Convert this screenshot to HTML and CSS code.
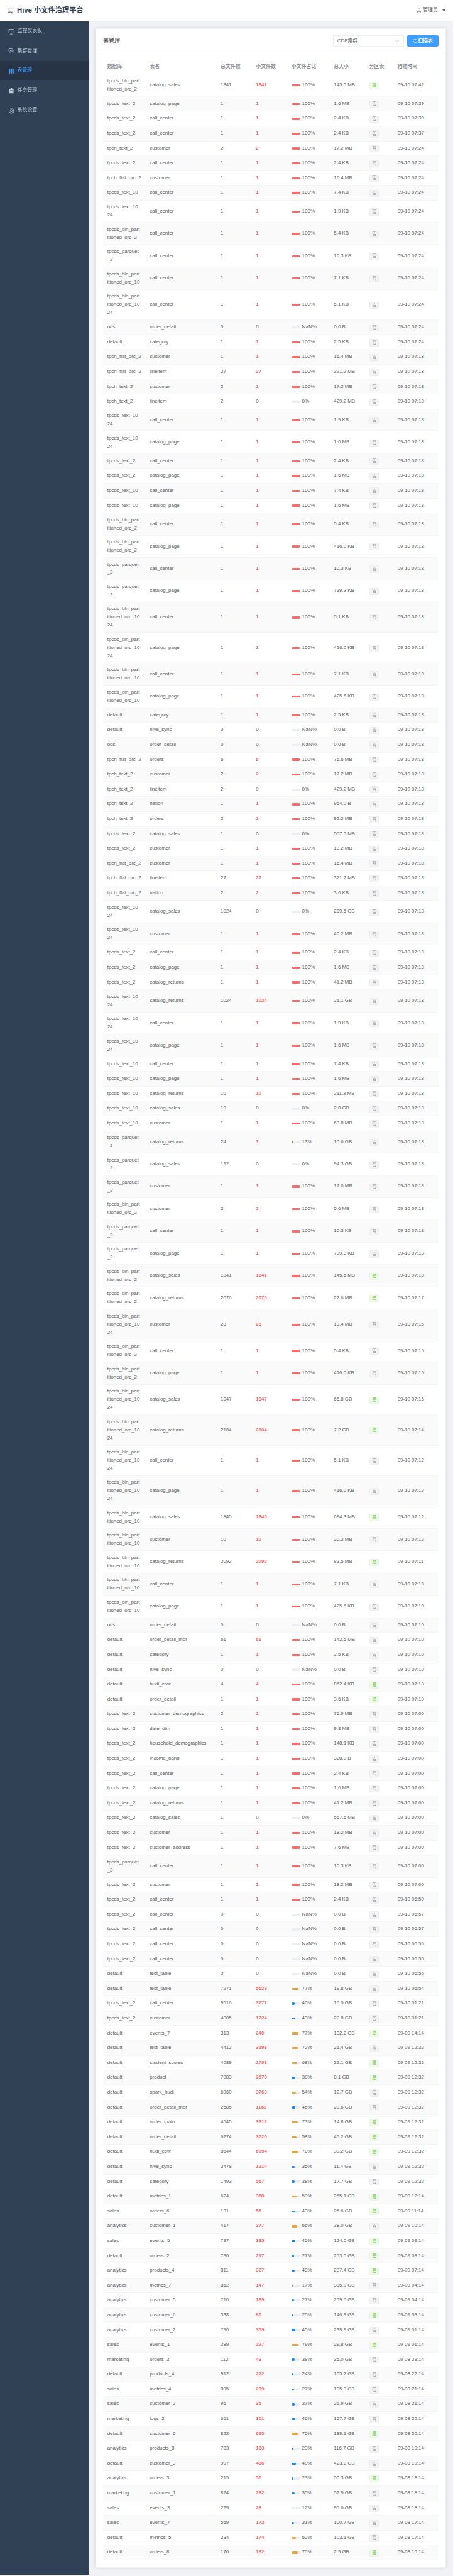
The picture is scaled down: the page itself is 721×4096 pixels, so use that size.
FILE: index.html
```html
<!DOCTYPE html>
<html lang="zh-CN">
<head>
<meta charset="utf-8">
<title>Hive 小文件治理平台</title>
<link rel="stylesheet" href="styles.css">
</head>
<body>
<div class="app">
  <header class="topbar">
    <h1 class="brand">
      <svg class="brand-icon" viewBox="0 0 1024 1024"><path d="M32 128h960v64H32z"/><path d="M192 192v512h640V192zm-64-64h768v608a32 32 0 0 1-32 32H160a32 32 0 0 1-32-32z"/><path d="M322.176 960H248.32l144.64-250.56 55.424 32zm453.888 0h-73.856L576 741.44l55.424-32z"/></svg>
      <span>Hive 小文件治理平台</span>
    </h1>
    <div class="user">
      <svg class="user-icon" viewBox="0 0 1024 1024"><path d="M512 512a192 192 0 1 0 0-384 192 192 0 0 0 0 384m0 64a256 256 0 1 1 0-512 256 256 0 0 1 0 512m320 320v-96a96 96 0 0 0-96-96H288a96 96 0 0 0-96 96v96a32 32 0 1 1-64 0v-96a160 160 0 0 1 160-160h448a160 160 0 0 1 160 160v96a32 32 0 1 1-64 0"/></svg>
      <span>管理员</span>
      <svg class="caret" viewBox="0 0 10 8"><path d="M0 0h10L5 8z"/></svg>
    </div>
  </header>
  <div class="layout">
    <nav class="sidebar">
      <a class="menu-item"><svg viewBox="0 0 1024 1024"><path d="M544 768v128h192a32 32 0 1 1 0 64H288a32 32 0 1 1 0-64h192V768H192A128 128 0 0 1 64 640V256a128 128 0 0 1 128-128h640a128 128 0 0 1 128 128v384a128 128 0 0 1-128 128zM192 192a64 64 0 0 0-64 64v384a64 64 0 0 0 64 64h640a64 64 0 0 0 64-64V256a64 64 0 0 0-64-64z"/></svg><span>监控仪表板</span></a>
      <a class="menu-item"><svg viewBox="0 0 1024 1024"><path d="M640 384v64H448a128 128 0 0 0-128 128v128a128 128 0 0 0 128 128h320a128 128 0 0 0 128-128V576a128 128 0 0 0-64-110.848V394.88c74.56 26.368 128 97.472 128 181.056v128a192 192 0 0 1-192 192H448a192 192 0 0 1-192-192V576a192 192 0 0 1 192-192z"/><path d="M384 640v-64h192a128 128 0 0 0 128-128V320a128 128 0 0 0-128-128H256a128 128 0 0 0-128 128v128a128 128 0 0 0 64 110.848v70.272A192.064 192.064 0 0 1 64 448V320a192 192 0 0 1 192-192h320a192 192 0 0 1 192 192v128a192 192 0 0 1-192 192z"/></svg><span>集群管理</span></a>
      <a class="menu-item active"><svg viewBox="0 0 1024 1024"><path d="M640 384v256H384V384zm64 0h192v256H704zm-64 512H384V704h256zm64 0V704h192v192zm-64-768v192H384V128zm64 0h192v192H704zM320 384v256H128V384zm0 512H128V704h192zm0-768v192H128V128z"/></svg><span>表管理</span></a>
      <a class="menu-item"><svg viewBox="0 0 1024 1024"><path d="M704 192h160v736H160V192h160v64h384zM288 512h448v-64H288zm0 256h448v-64H288zm96-576V96h256v96z"/></svg><span>任务管理</span></a>
      <a class="menu-item"><svg viewBox="0 0 1024 1024"><path d="M600.704 64a32 32 0 0 1 30.464 22.208l35.2 109.376c14.784 7.232 28.928 15.36 42.432 24.512l112.384-24.192a32 32 0 0 1 34.432 15.36L944.32 364.8a32 32 0 0 1-4.032 37.504l-77.12 85.12a357.12 357.12 0 0 1 0 49.024l77.12 85.248a32 32 0 0 1 4.032 37.504l-88.704 153.6a32 32 0 0 1-34.432 15.296L708.8 803.904c-13.44 9.088-27.648 17.28-42.368 24.512l-35.264 109.376A32 32 0 0 1 600.704 960H423.296a32 32 0 0 1-30.464-22.208L357.696 828.48a351.616 351.616 0 0 1-42.56-24.64l-112.32 24.256a32 32 0 0 1-34.432-15.36L79.68 659.2a32 32 0 0 1 4.032-37.504l77.12-85.248a357.12 357.12 0 0 1 0-48.896l-77.12-85.248A32 32 0 0 1 79.68 364.8l88.704-153.6a32 32 0 0 1 34.432-15.296l112.32 24.256c13.568-9.152 27.776-17.408 42.56-24.64l35.2-109.312A32 32 0 0 1 423.232 64H600.64zm-23.424 64H446.72l-36.352 113.088-24.512 11.968a294.113 294.113 0 0 0-34.816 20.096l-22.656 15.36-116.224-25.088-65.28 113.152 79.68 88.192-1.92 27.136a293.12 293.12 0 0 0 0 40.192l1.92 27.136-79.808 88.192 65.344 113.152 116.224-25.024 22.656 15.296a294.113 294.113 0 0 0 34.816 20.096l24.512 11.968L446.72 896h130.688l36.48-113.152 24.448-11.904a288.282 288.282 0 0 0 34.752-20.096l22.592-15.296 116.288 25.024 65.28-113.152-79.744-88.192 1.92-27.136a293.12 293.12 0 0 0 0-40.256l-1.92-27.136 79.808-88.128-65.344-113.152-116.288 24.96-22.592-15.232a287.616 287.616 0 0 0-34.752-20.096l-24.448-11.904L577.344 128zM512 320a192 192 0 1 1 0 384 192 192 0 0 1 0-384m0 64a128 128 0 1 0 0 256 128 128 0 0 0 0-256"/></svg><span>系统设置</span></a>
    </nav>
    <main class="content">
      <section class="card">
        <div class="card-header">
          <span class="card-title">表管理</span>
          <div class="tools">
            <div class="select">
              <span>CDP集群</span>
              <svg viewBox="0 0 1024 1024"><path d="M831.872 340.864 512 652.672 192.128 340.864a30.592 30.592 0 0 0-42.752 0 29.12 29.12 0 0 0 0 41.6L489.664 714.24a32 32 0 0 0 44.672 0l340.288-331.712a29.12 29.12 0 0 0 0-41.728 30.592 30.592 0 0 0-42.752 0z"/></svg>
            </div>
            <button class="scan"><svg viewBox="0 0 1024 1024"><path d="M771.776 794.88A384 384 0 0 1 128 512h64a320 320 0 0 0 555.712 216.448H654.72a32 32 0 1 1 0-64h149.056a32 32 0 0 1 32 32v148.928a32 32 0 1 1-64 0v-50.56zM276.288 295.616h92.992a32 32 0 0 1 0 64H220.16a32 32 0 0 1-32-32V178.56a32 32 0 0 1 64 0v50.56A384 384 0 0 1 896.128 512h-64a320 320 0 0 0-555.776-216.384z"/></svg><span>扫描表</span></button>
          </div>
        </div>
        <div class="card-body">
          <div class="row head">
            <div>数据库</div><div>表名</div><div>总文件数</div><div>小文件数</div><div>小文件占比</div><div>总大小</div><div>分区表</div><div>扫描时间</div>
          </div>
          <div id="rows"></div>
        </div>
      </section>
    </main>
  </div>
</div>
<script src="tables.js"></script>
</body>
</html>
```
FILE: styles.css
```css
* {
  box-sizing: border-box;
}

body {
  margin: 0;
  background: #f0f2f5;
}

.app {
  zoom: 0.5635;
  font-family: "Liberation Sans", "Noto Sans CJK SC", sans-serif;
  font-size: 14px;
  line-height: 23px;
  color: #606266;
}

svg {
  display: block;
  fill: currentColor;
  flex: none;
}

.topbar {
  height: 60px;
  padding: 0 20px;
  display: flex;
  align-items: center;
  justify-content: space-between;
  background: #fff;
  box-shadow: inset 0 -1px 0 #e4e7ed;
}

.brand {
  margin: 0;
  display: flex;
  align-items: center;
  gap: 8px;
  font-size: 20px;
  font-weight: 700;
  color: #304156;
  white-space: nowrap;
}

.brand-icon {
  width: 20px;
  height: 20px;
}

.user {
  display: flex;
  align-items: center;
  gap: 4px;
}

.user-icon {
  width: 14px;
  height: 14px;
}

.caret {
  width: 9px;
  height: 7px;
  margin: 0 2px 0 8px;
}

.layout {
  display: flex;
}

.sidebar {
  width: 250px;
  flex: none;
  background: #304156;
}

.menu-item {
  height: 56px;
  padding: 0 23px;
  display: flex;
  align-items: center;
  gap: 8px;
  color: #bfcbd9;
}

.menu-item svg {
  width: 18px;
  height: 18px;
}

.menu-item.active {
  background: #263445;
  color: #409eff;
}

.content {
  flex: 1;
  min-width: 0;
  padding: 20px;
}

.card {
  padding: 1px;
  background: #fff;
  border-radius: 4px;
  box-shadow: inset 0 0 0 1px #e4e7ed, 0 0 12px rgba(0, 0, 0, 0.12);
}

.card-header {
  height: 69px;
  padding: 0 20px;
  display: flex;
  align-items: center;
  justify-content: space-between;
  box-shadow: inset 0 -1px 0 #e4e7ed;
}

.card-title {
  font-size: 16px;
  color: #303133;
}

.tools {
  display: flex;
  gap: 10px;
}

.select {
  width: 200px;
  height: 32px;
  padding: 0 12px;
  display: flex;
  align-items: center;
  justify-content: space-between;
  border-radius: 4px;
  box-shadow: inset 0 0 0 1px #dcdfe6;
}

.select svg {
  width: 14px;
  height: 14px;
  color: #a8abb2;
}

.scan {
  width: 88px;
  height: 32px;
  padding: 0;
  display: flex;
  align-items: center;
  justify-content: center;
  border: 0;
  border-radius: 4px;
  background: #409eff;
  color: #fff;
  font: inherit;
  font-weight: 500;
}

.scan svg {
  width: 14px;
  height: 14px;
}

.card-body {
  padding: 20px;
}

.row {
  min-height: 41.88px;
  padding: 8px 0 9px;
  display: grid;
  grid-template-columns: 120px 200px 100px 100px 120px 100px 80px 1fr;
  align-items: center;
  background: #fff;
  box-shadow: inset 0 -1px 0 #ebeef5;
}

.row > div {
  padding: 0 12px;
  white-space: pre;
}

.row.even {
  background: #fafafa;
}

.row.head {
  min-height: 40px;
  font-weight: 700;
  color: #909399;
}

.small-files {
  color: #f56c6c;
  font-weight: 700;
}

.row > .ratio {
  display: flex;
  align-items: center;
  gap: 5px;
  font-size: 14.4px;
}

.track {
  width: 25px;
  height: 6px;
  border-radius: 3px;
  overflow: hidden;
  background: #ebeef5;
}

.fill {
  height: 100%;
  border-radius: 3px;
}

.fill.danger { background: #f56c6c; }
.fill.warning { background: #e6a23c; }
.fill.primary { background: #1989fa; }
.fill.success { background: #67c23a; }

.tag {
  width: 28px;
  height: 20px;
  margin-top: 2px;
  display: flex;
  align-items: center;
  justify-content: center;
  border-radius: 4px;
  font-size: 12px;
  line-height: 1;
  color: #909399;
  background: #f4f4f5;
  box-shadow: inset 0 0 0 1px #e9e9eb;
}

.tag.yes {
  color: #67c23a;
  background: #f0f9eb;
  box-shadow: inset 0 0 0 1px #e1f3d8;
}
```
FILE: tables.js
```js
// Database names, with the line breaks the narrow column gives them.
const DB = {
  b2: 'tpcds_bin_part\nitioned_orc_2',
  b10: 'tpcds_bin_part\nitioned_orc_10',
  b1024: 'tpcds_bin_part\nitioned_orc_10\n24',
  pq: 'tpcds_parquet\n_2',
  t2: 'tpcds_text_2',
  t10: 'tpcds_text_10',
  t1024: 'tpcds_text_10\n24',
  h2: 'tpch_text_2',
  f2: 'tpch_flat_orc_2',
  def: 'default',
  ana: 'analytics',
  mkt: 'marketing'
};

// database, table, total files, small files, size, scan time, partitioned
const DATA = `
b2,catalog_sales,1841,1841,145.5 MB,09-10 07:42,y
t2,catalog_page,1,1,1.6 MB,09-10 07:39
t2,call_center,1,1,2.4 KB,09-10 07:39
t2,call_center,1,1,2.4 KB,09-10 07:37
h2,customer,2,2,17.2 MB,09-10 07:24
t2,call_center,1,1,2.4 KB,09-10 07:24
f2,customer,1,1,16.4 MB,09-10 07:24
t10,call_center,1,1,7.4 KB,09-10 07:24
t1024,call_center,1,1,1.9 KB,09-10 07:24
b2,call_center,1,1,5.4 KB,09-10 07:24
pq,call_center,1,1,10.3 KB,09-10 07:24
b10,call_center,1,1,7.1 KB,09-10 07:24
b1024,call_center,1,1,5.1 KB,09-10 07:24
ods,order_detail,0,0,0.0 B,09-10 07:24
def,category,1,1,2.5 KB,09-10 07:24
f2,customer,1,1,16.4 MB,09-10 07:18
f2,lineitem,27,27,321.2 MB,09-10 07:18
h2,customer,2,2,17.2 MB,09-10 07:18
h2,lineitem,2,0,429.2 MB,09-10 07:18
t1024,call_center,1,1,1.9 KB,09-10 07:18
t1024,catalog_page,1,1,1.6 MB,09-10 07:18
t2,call_center,1,1,2.4 KB,09-10 07:18
t2,catalog_page,1,1,1.6 MB,09-10 07:18
t10,call_center,1,1,7.4 KB,09-10 07:18
t10,catalog_page,1,1,1.6 MB,09-10 07:18
b2,call_center,1,1,5.4 KB,09-10 07:18
b2,catalog_page,1,1,416.0 KB,09-10 07:18
pq,call_center,1,1,10.3 KB,09-10 07:18
pq,catalog_page,1,1,739.3 KB,09-10 07:18
b1024,call_center,1,1,5.1 KB,09-10 07:18
b1024,catalog_page,1,1,416.0 KB,09-10 07:18
b10,call_center,1,1,7.1 KB,09-10 07:18
b10,catalog_page,1,1,425.6 KB,09-10 07:18
def,category,1,1,2.5 KB,09-10 07:18
def,hive_sync,0,0,0.0 B,09-10 07:18
ods,order_detail,0,0,0.0 B,09-10 07:18
f2,orders,6,6,76.6 MB,09-10 07:18
h2,customer,2,2,17.2 MB,09-10 07:18
h2,lineitem,2,0,429.2 MB,09-10 07:18
h2,nation,1,1,964.0 B,09-10 07:18
h2,orders,2,2,92.2 MB,09-10 07:18
t2,catalog_sales,1,0,567.6 MB,09-10 07:18
t2,customer,1,1,18.2 MB,09-10 07:18
f2,customer,1,1,16.4 MB,09-10 07:18
f2,lineitem,27,27,321.2 MB,09-10 07:18
f2,nation,2,2,3.6 KB,09-10 07:18
t1024,catalog_sales,1024,0,289.5 GB,09-10 07:18
t1024,customer,1,1,40.2 MB,09-10 07:18
t2,call_center,1,1,2.4 KB,09-10 07:18
t2,catalog_page,1,1,1.6 MB,09-10 07:18
t2,catalog_returns,1,1,41.2 MB,09-10 07:18
t1024,catalog_returns,1024,1024,21.1 GB,09-10 07:18
t1024,call_center,1,1,1.9 KB,09-10 07:18
t1024,catalog_page,1,1,1.6 MB,09-10 07:18
t10,call_center,1,1,7.4 KB,09-10 07:18
t10,catalog_page,1,1,1.6 MB,09-10 07:18
t10,catalog_returns,10,10,211.3 MB,09-10 07:18
t10,catalog_sales,10,0,2.8 GB,09-10 07:18
t10,customer,1,1,63.8 MB,09-10 07:18
pq,catalog_returns,24,3,10.6 GB,09-10 07:18
pq,catalog_sales,192,0,94.3 GB,09-10 07:18
pq,customer,1,1,17.0 MB,09-10 07:18
b2,customer,2,2,5.6 MB,09-10 07:18
pq,call_center,1,1,10.3 KB,09-10 07:18
pq,catalog_page,1,1,739.3 KB,09-10 07:18
b2,catalog_sales,1841,1841,145.5 MB,09-10 07:18,y
b2,catalog_returns,2076,2076,22.6 MB,09-10 07:17,y
b1024,customer,28,28,13.4 MB,09-10 07:15
b2,call_center,1,1,5.4 KB,09-10 07:15
b2,catalog_page,1,1,416.0 KB,09-10 07:15
b1024,catalog_sales,1847,1847,65.8 GB,09-10 07:15,y
b1024,catalog_returns,2104,2104,7.2 GB,09-10 07:14,y
b1024,call_center,1,1,5.1 KB,09-10 07:12
b1024,catalog_page,1,1,416.0 KB,09-10 07:12
b10,catalog_sales,1845,1845,694.3 MB,09-10 07:12,y
b10,customer,10,10,20.3 MB,09-10 07:12
b10,catalog_returns,2092,2092,83.5 MB,09-10 07:11,y
b10,call_center,1,1,7.1 KB,09-10 07:10
b10,catalog_page,1,1,425.6 KB,09-10 07:10
ods,order_detail,0,0,0.0 B,09-10 07:10
def,order_detail_mor,61,61,142.5 MB,09-10 07:10
def,category,1,1,2.5 KB,09-10 07:10
def,hive_sync,0,0,0.0 B,09-10 07:10
def,hudi_cow,4,4,852.4 KB,09-10 07:10,y
def,order_detail,1,1,3.6 KB,09-10 07:10,y
t2,customer_demographics,2,2,76.9 MB,09-10 07:00
t2,date_dim,1,1,9.8 MB,09-10 07:00
t2,household_demographics,1,1,148.1 KB,09-10 07:00
t2,income_band,1,1,328.0 B,09-10 07:00
t2,call_center,1,1,2.4 KB,09-10 07:00
t2,catalog_page,1,1,1.6 MB,09-10 07:00
t2,catalog_returns,1,1,41.2 MB,09-10 07:00
t2,catalog_sales,1,0,567.6 MB,09-10 07:00
t2,customer,1,1,18.2 MB,09-10 07:00
t2,customer_address,1,1,7.6 MB,09-10 07:00
pq,call_center,1,1,10.3 KB,09-10 07:00
t2,customer,1,1,18.2 MB,09-10 07:00
t2,call_center,1,1,2.4 KB,09-10 06:59
t2,call_center,0,0,0.0 B,09-10 06:57
t2,call_center,0,0,0.0 B,09-10 06:57
t2,call_center,0,0,0.0 B,09-10 06:56
t2,call_center,0,0,0.0 B,09-10 06:55
def,test_table,0,0,0.0 B,09-10 06:55
def,test_table,7271,5623,19.8 GB,09-10 06:54
t2,call_center,9516,3777,16.5 GB,09-10 01:21
t2,customer,4005,1724,22.8 GB,09-10 01:21
def,events_7,313,240,132.2 GB,09-09 14:14,y
def,test_table,4412,3193,21.4 GB,09-09 12:32
def,student_scores,4089,2798,32.1 GB,09-09 12:32,y
def,product,7083,2679,8.1 GB,09-09 12:32,y
def,spark_hudi,6960,3763,12.7 GB,09-09 12:32
def,order_detail_mor,2585,1162,29.6 GB,09-09 12:32
def,order_main,4545,3312,14.8 GB,09-09 12:32,y
def,order_detail,6274,3620,45.2 GB,09-09 12:32,y
def,hudi_cow,8644,6054,39.2 GB,09-09 12:32,y
def,hive_sync,3478,1214,11.4 GB,09-09 12:32
def,category,1493,567,17.7 GB,09-09 12:32
def,metrics_1,624,368,265.1 GB,09-09 12:14,y
sales,orders_6,131,56,25.6 GB,09-09 11:14,y
ana,customer_1,417,277,38.0 GB,09-09 10:14
sales,events_5,737,335,124.0 GB,09-09 09:14,y
def,orders_2,790,217,253.0 GB,09-09 08:14,y
ana,products_4,811,327,237.4 GB,09-09 07:14,y
ana,metrics_7,862,147,385.9 GB,09-09 04:14
ana,customer_5,710,189,259.5 GB,09-09 04:14
ana,customer_6,338,86,146.9 GB,09-09 03:14,y
ana,customer_2,790,359,239.9 GB,09-09 01:14
sales,events_1,289,227,29.8 GB,09-09 01:14,y
mkt,orders_3,112,43,35.0 GB,09-08 23:14
def,products_4,912,222,105.2 GB,09-08 22:14
sales,metrics_4,895,239,195.3 GB,09-08 21:14
sales,customer_2,95,35,26.9 GB,09-08 21:14
mkt,logs_2,651,301,157.7 GB,09-08 20:14
def,customer_6,822,615,189.1 GB,09-08 20:14,y
ana,products_8,783,183,116.7 GB,09-08 19:14
def,customer_3,997,486,423.8 GB,09-08 19:14
ana,orders_3,215,50,50.3 GB,09-08 18:14,y
mkt,customer_1,824,292,52.9 GB,09-08 18:14
sales,events_3,229,28,95.6 GB,09-08 18:14
sales,events_7,559,172,100.7 GB,09-08 17:14
def,metrics_5,334,174,103.1 GB,09-08 17:14
def,orders_8,176,132,2.9 GB,09-08 16:14,y
`;

function level(pct) {
  if (pct >= 80) return 'danger';
  if (pct >= 50) return 'warning';
  if (pct >= 20) return 'primary';
  return 'success';
}

document.getElementById('rows').innerHTML = DATA.trim().split('\n').map((line, i) => {
  const [db, table, total, small, size, time, part] = line.split(',');
  const pct = Math.round(small / total * 100);
  const fill = pct > 0 ? `<div class="fill ${level(pct)}" style="width:${pct}%"></div>` : '';
  return `<div class="row${i % 2 ? ' even' : ''}">` +
    `<div>${DB[db] || db}</div><div>${table}</div><div>${total}</div>` +
    `<div${small > 0 ? ' class="small-files"' : ''}>${small}</div>` +
    `<div class="ratio"><div class="track">${fill}</div><span>${pct}%</span></div>` +
    `<div>${size}</div>` +
    `<div><span class="tag${part ? ' yes' : ''}">${part ? '是' : '否'}</span></div>` +
    `<div>${time}</div></div>`;
}).join('');
```
